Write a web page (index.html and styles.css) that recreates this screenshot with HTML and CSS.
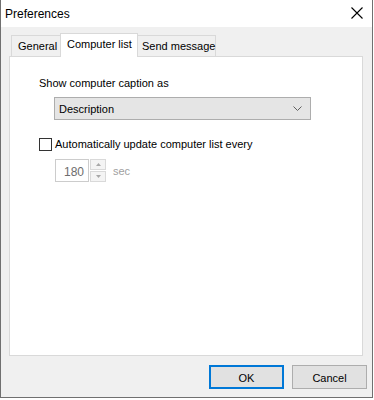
FILE: index.html
```html
<!DOCTYPE html>
<html>
<head>
<meta charset="utf-8">
<link rel="stylesheet" href="styles.css">
</head>
<body>
<div class="win">
  <div class="titlebar">
    <span class="title">Preferences</span>
    <svg class="close" width="12" height="12" viewBox="0 0 12 12"><path d="M0.5 0.5 L11.5 11.5 M11.5 0.5 L0.5 11.5" stroke="#000" stroke-width="1.1" fill="none"/></svg>
  </div>
  <div class="body">
    <div class="tabs">
      <div class="tab first">General</div>
      <div class="tab active">Computer list</div>
      <div class="tab">Send message</div>
    </div>
    <div class="panel">
      <div class="label">Show computer caption as</div>
      <div class="select">
        <span>Description</span>
        <svg width="9" height="6" viewBox="0 0 9 6"><path d="M0.5 0.5 L4.5 4.5 L8.5 0.5" stroke="#606060" stroke-width="1" fill="none"/></svg>
      </div>
      <div class="checkrow">
        <span class="check"></span>
        <span class="checklabel">Automatically update computer list every</span>
      </div>
      <div class="spinrow">
        <div class="spininput">180</div>
        <div class="spinbtns">
          <div class="spinbtn"><svg width="5" height="3" viewBox="0 0 5 3"><path d="M0 3 L2.5 0 L5 3 Z" fill="#a8a8a8"/></svg></div>
          <div class="spinbtn"><svg width="5" height="3" viewBox="0 0 5 3"><path d="M0 0 L2.5 3 L5 0 Z" fill="#a8a8a8"/></svg></div>
        </div>
        <span class="sec">sec</span>
      </div>
    </div>
    <div class="buttons">
      <div class="btn default">OK</div>
      <div class="btn">Cancel</div>
    </div>
  </div>
</div>
</body>
</html>
```
FILE: styles.css
```css
html, body {
  margin: 0;
  padding: 0;
  background: #ffffff;
}
body {
  font-family: "Liberation Sans", Arial, sans-serif;
  font-size: 11px;
  color: #000;
  width: 374px;
  height: 400px;
  overflow: hidden;
}
.win {
  box-sizing: border-box;
  width: 373px;
  height: 398px;
  border: 1px solid #707070;
  border-top: none;
  background: #f0f0f0;
  display: flex;
  flex-direction: column;
}
.titlebar {
  height: 27px;
  background: #ffffff;
  display: flex;
  align-items: center;
  justify-content: space-between;
  padding: 0 9px 1px 4px;
  box-sizing: border-box;
}
.title {
  font-size: 12px;
  padding-top: 1px;
}
.close {
  display: block;
  margin-top: 0px;
}
.body {
  flex: 1;
  display: flex;
  flex-direction: column;
  padding: 6px 8px 0 8px;
}
.tabs {
  display: flex;
  align-items: flex-end;
  height: 24px;
  padding-left: 2px;
  margin-bottom: -1px;
  position: relative;
  z-index: 1;
}
.tab {
  box-sizing: border-box;
  height: 21px;
  border: 1px solid #d9d9d9;
  border-bottom: none;
  background: #f0f0f0;
  padding: 4px 5px 0 6px;
  margin-left: -1px;
  margin-bottom: 1px;
  white-space: nowrap;
}
.tab.first {
  margin-left: 0;
  width: 50px;
}
.tab.active {
  height: 24px;
  background: #ffffff;
  margin-bottom: 0;
  margin-left: -1px;
  margin-right: -1px;
  width: 78px;
  padding: 4px 0 0 6px;
  position: relative;
  z-index: 2;
}
.tab:last-child {
  width: 80px;
  padding-left: 5px;
}
.panel {
  box-sizing: border-box;
  height: 300px;
  width: 354px;
  background: #ffffff;
  border: 1px solid #d9d9d9;
  padding: 20px 0 0 29px;
}
.label {
  line-height: 13px;
}
.select {
  box-sizing: border-box;
  margin: 7px 0 0 15px;
  width: 257px;
  height: 23px;
  background: #e5e5e5;
  border: 1px solid #adadad;
  display: flex;
  align-items: center;
  justify-content: space-between;
  padding: 0 8px 0 4px;
}
.checkrow {
  display: flex;
  align-items: center;
  margin-top: 18px;
  margin-left: 0;
}
.check {
  box-sizing: border-box;
  width: 13px;
  height: 13px;
  border: 1px solid #333333;
  background: #fff;
  margin-right: 3px;
}
.checklabel {
  line-height: 13px;
}
.spinrow {
  display: flex;
  align-items: center;
  margin: 8px 0 0 16px;
}
.spininput {
  box-sizing: border-box;
  width: 34px;
  height: 23px;
  border: 1px solid #cccccc;
  color: #6d6d6d;
  text-align: right;
  padding: 5px 4px 0 0;
  font-size: 12px;
}
.spinbtns {
  display: flex;
  flex-direction: column;
  gap: 1px;
  margin-left: 1px;
}
.spinbtn {
  box-sizing: border-box;
  width: 16px;
  height: 11px;
  border: 1px solid #d9d9d9;
  background: #f4f4f4;
  display: flex;
  align-items: center;
  justify-content: center;
}
.spinbtn svg {
  display: block;
}
.sec {
  color: #a0a0a0;
  margin-left: 7px;
  margin-top: 1px;
}
.buttons {
  display: flex;
  justify-content: flex-end;
  gap: 8px;
  margin-top: 9px;
  margin-right: -3px;
}
.btn {
  box-sizing: border-box;
  width: 75px;
  height: 24px;
  background: #e1e1e1;
  border: 1px solid #adadad;
  display: flex;
  align-items: center;
  justify-content: center;
  padding-top: 1px;
}
.btn.default {
  border: 2px solid #0078d7;
}
```
